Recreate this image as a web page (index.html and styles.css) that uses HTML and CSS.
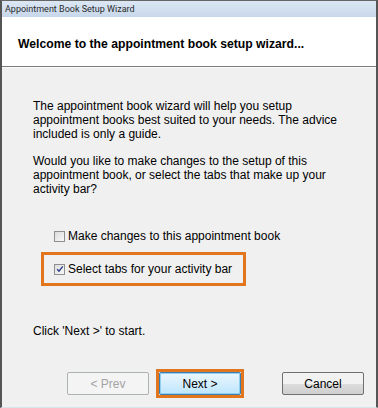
FILE: index.html
```html
<!DOCTYPE html>
<html lang="en">
<head>
  <meta charset="UTF-8" />
  <title>Appointment Book Setup Wizard</title>
  <link rel="stylesheet" href="styles.css">
</head>
<body>
<div class="window">
  <div class="titlebar">Appointment Book Setup Wizard</div>
  <div class="header">
    <h1>Welcome to the appointment book setup wizard...</h1>
  </div>
  <div class="content">
    <p>The appointment book wizard will help you setup appointment books best suited to your needs. The advice included is only a guide.</p>
    <p class="second">Would you like to make changes to the setup of this appointment book, or select the tabs that make up your activity bar?</p>

    <label class="check first-check"><span class="box"></span>Make changes to this appointment book</label>
    <div class="highlight">
      <label class="check"><span class="box checked"><svg viewBox="0 0 8 8" width="8" height="8"><path d="M1.2 4.2 L3 6.2 L6.8 1.4" fill="none" stroke="#2a3f8f" stroke-width="1.4"/></svg></span>Select tabs for your activity bar</label>
    </div>

    <p class="start">Click 'Next &gt;' to start.</p>
  </div>
  <div class="buttons">
    <button class="btn disabled">&lt; Prev</button>
    <div class="focus-ring"><button class="btn default">Next &gt;</button></div>
    <button class="btn cancel">Cancel</button>
  </div>
</div>
</body>
</html>
```

FILE: styles.css
```css
body {
  margin: 0;
  font-family: "Liberation Sans", Arial, sans-serif;
  background: #f0f0f0;
}
.window {
  width: 378px;
  height: 408px;
  box-sizing: border-box;
  border: 2px solid #555;
  border-top: 1px solid #666;
  border-bottom: 1px solid #d6e4ee;
  background: #f0f0f0;
  display: flex;
  flex-direction: column;
}
.titlebar {
  height: 16px;
  line-height: 16px;
  padding-left: 3px;
  font-family: Roboto, sans-serif;
  font-size: 9px;
  color: #2b2b2b;
  background: linear-gradient(#dce7f4, #c7d7ea);
}
.header {
  height: 49px;
  background: #fff;
  border-bottom: 1px solid #7c7c7c;
  box-shadow: 0 1px 0 #fafafa;
}
.header h1 {
  margin: 0;
  padding: 19px 0 0 16px;
  font-size: 12.2px;
  line-height: 16px;
  font-weight: bold;
  color: #000;
}
.content {
  padding: 32px 0 0 31px;
  font-size: 12px;
  line-height: 14px;
  color: #000;
}
.content p {
  margin: 0;
  width: 320px;
}
.content p.second {
  margin-top: 13px;
}
.check {
  display: flex;
  align-items: center;
  font-size: 12px;
  line-height: 16px;
}
.first-check {
  margin: 32px 0 0 21px;
}
.box {
  width: 9px;
  height: 9px;
  border: 1px solid #8e8f8f;
  background: linear-gradient(135deg, #dcdcdc, #f8f8f8);
  margin-right: 3px;
  display: flex;
  align-items: center;
  justify-content: center;
}
.highlight {
  width: 189px;
  height: 28px;
  margin: 8px 0 0 8px;
  border: 3px solid #e2761e;
  display: flex;
  align-items: center;
  padding-left: 10px;
}
.content p.start {
  margin-top: 38px;
}
.buttons {
  margin-top: auto;
  margin-bottom: 9px;
  display: flex;
  justify-content: flex-end;
  align-items: center;
  padding-right: 12px;
}
.btn {
  width: 82px;
  height: 23px;
  box-sizing: border-box;
  font-family: "Liberation Sans", Arial, sans-serif;
  font-size: 12px;
  border-radius: 2px;
  padding: 0;
}
.btn.disabled {
  border: 1px solid #adb2b5;
  background: #f4f4f4;
  color: #a3a3a3;
}
.focus-ring {
  margin: 0 38px 0 7px;
  border: 3px solid #e2761e;
  line-height: 0;
}
.btn.default {
  border: 1px solid #3c7fb1;
  background: linear-gradient(#eaf6fd, #bee6fd);
  box-shadow: inset 0 0 0 1px #8fd0f2;
  color: #000;
}
.btn.cancel {
  border: 1px solid #707070;
  background: linear-gradient(#f2f2f2 50%, #dddddd 50%, #cfcfcf);
  color: #000;
}
```
